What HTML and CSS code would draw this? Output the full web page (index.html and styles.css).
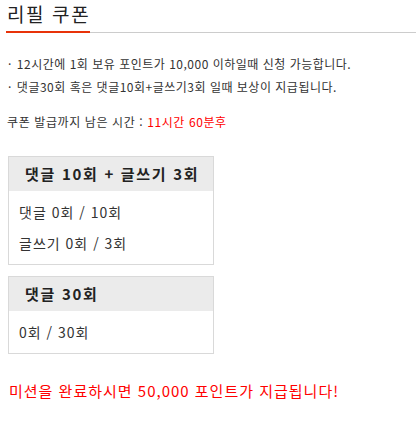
FILE: index.html
```html
<!DOCTYPE html>
<html lang="ko">
<head>
    <meta charset="UTF-8">
    <meta name="viewport" content="width=device-width, initial-scale=1.0">
    <title>리필 쿠폰</title>
    <link rel="stylesheet" href="styles.css">
</head>
<body>
    <!-- 제목 -->
    <div class="title-bar">
        <h2 class="title">리필 쿠폰</h2>
    </div>

    <!-- 안내 -->
    <ul class="notice">
        <li>12시간에 1회 보유 포인트가 10,000 이하일때 신청 가능합니다.</li>
        <li>댓글30회 혹은 댓글10회+글쓰기3회 일때 보상이 지급됩니다.</li>
    </ul>

    <p class="remain">쿠폰 발급까지 남은 시간 : <span class="red">11시간 60분후</span></p>

    <!-- 미션 1 -->
    <div class="mission">
        <div class="mission-head">댓글 10회 + 글쓰기 3회</div>
        <div class="mission-body">
            <p>댓글 0회 / 10회</p>
            <p>글쓰기 0회 / 3회</p>
        </div>
    </div>

    <!-- 미션 2 -->
    <div class="mission">
        <div class="mission-head">댓글 30회</div>
        <div class="mission-body">
            <p>0회 / 30회</p>
        </div>
    </div>

    <p class="reward">미션을 완료하시면 50,000 포인트가 지급됩니다!</p>
</body>
</html>
```

FILE: styles.css
```css
body { margin: 0; font-family: "Noto Sans CJK KR", "Noto Sans", sans-serif; color: #333; background: #fff; }
.title-bar { margin-left: 6px; border-bottom: 1px solid #ccc; display: flex; height: 32px; }
.title { margin: 0 0 -1px 0; padding: 0 0 0 1px; font-size: 19px; letter-spacing: 1.6px; font-weight: normal; line-height: 28px; color: #222; border-bottom: 2px solid #e83209; box-sizing: border-box; height: 33px; }
.notice { list-style: none; margin: 19px 0 0 0; padding: 0 0 0 8px; font-size: 12px; letter-spacing: 0.5px; }
.notice li { line-height: 23px; }
.notice li::before { content: "·"; margin-right: 5px; }
.remain { margin: 14px 0 0 7px; font-size: 12px; letter-spacing: 0.6px; line-height: 20px; }
.red { color: #f00; }
.mission { width: 206px; margin: 24px 0 0 8px; border: 1px solid #d9d9d9; box-sizing: border-box; }
.mission + .mission { margin-top: 11px; }
.mission-head { background: #ebebeb; height: 34px; line-height: 34px; font-size: 15px; letter-spacing: 1.7px; font-weight: bold; padding-left: 16px; color: #222; }
.mission-body { padding: 6px 10px 5px 10px; }
.mission-body p { margin: 0; font-size: 14px; letter-spacing: 1px; line-height: 31px; }
.reward { margin: 26px 0 0 9px; font-size: 15px; letter-spacing: 1px; color: #f00; }
```
